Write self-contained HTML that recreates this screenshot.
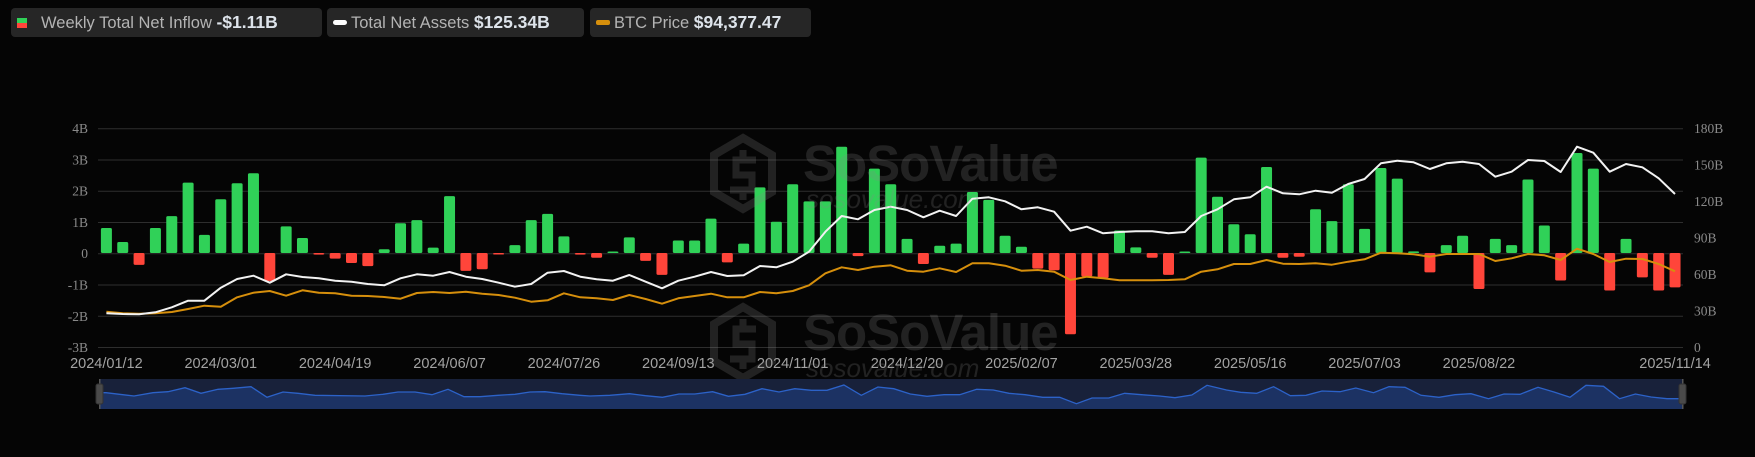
<!DOCTYPE html>
<html><head><meta charset="utf-8">
<style>
html,body{margin:0;padding:0;background:#050505;width:1755px;height:457px;overflow:hidden;font-family:"Liberation Sans",sans-serif;}
.lg{position:absolute;top:8px;height:29px;background:#262626;border-radius:4px;color:#b4b4b4;font-size:16.5px;line-height:29px;white-space:nowrap;}
.lg b{color:#dde3ea;font-size:17.5px;}
svg{position:absolute;left:0;top:0;}
</style></head><body>
<div class="lg" style="left:11px;width:311px;">
 <span style="position:absolute;left:6px;top:10px;width:10px;height:5px;background:#30d158"></span>
 <span style="position:absolute;left:6px;top:15px;width:10px;height:5px;background:#ff453a"></span>
 <span style="position:absolute;left:30px;">Weekly Total Net Inflow <b>-$1.11B</b></span>
</div>
<div class="lg" style="left:327px;width:257px;">
 <span style="position:absolute;left:6px;top:12px;width:14px;height:5px;border-radius:3px;background:#fff"></span>
 <span style="position:absolute;left:24px;">Total Net Assets <b>$125.34B</b></span>
</div>
<div class="lg" style="left:590px;width:221px;">
 <span style="position:absolute;left:6px;top:12px;width:14px;height:5px;border-radius:2px;background:#d68f0c"></span>
 <span style="position:absolute;left:24px;">BTC Price <b>$94,377.47</b></span>
</div>
<svg id="c" width="1755" height="457" xmlns="http://www.w3.org/2000/svg"></svg>
<script>
var bars=[0.8,0.35,-0.38,0.8,1.18,2.25,0.58,1.72,2.23,2.55,-0.9,0.85,0.48,-0.05,-0.18,-0.32,-0.42,0.12,0.95,1.05,0.17,1.82,-0.57,-0.52,-0.02,0.25,1.05,1.25,0.53,-0.05,-0.15,0.02,0.5,-0.25,-0.7,0.4,0.4,1.1,-0.3,0.3,2.1,1.0,2.2,1.65,1.65,3.4,-0.1,2.7,2.2,0.45,-0.35,0.23,0.3,1.95,1.7,0.55,0.2,-0.5,-0.55,-2.6,-0.75,-0.8,0.72,0.18,-0.15,-0.7,0.02,3.05,1.8,0.92,0.6,2.75,-0.15,-0.12,1.4,1.02,2.2,0.77,2.72,2.38,0.05,-0.62,0.25,0.55,-1.15,0.45,0.25,2.35,0.88,-0.88,3.2,2.7,-1.2,0.45,-0.78,-1.2,-1.1];
var wh=[313.3,314,314.3,312.3,307.3,300.7,300.7,287.7,279,275.7,282.7,274.3,277,278.3,280.7,281.7,284,285.3,278.3,274.3,275.7,272,276.7,279,282.7,286.7,284,272.7,271,276.7,279.3,280.7,275,281.7,288.3,280.7,276.7,272,276,275.3,266,267.3,261.7,251.7,231.7,216,219.3,210,206.7,210,217.3,210.7,216,198.7,197.3,201.3,209.3,207.3,211.7,230.7,226.7,233.3,232,231.3,231.3,233.3,232,216,209.3,199.3,197.3,186.7,193.3,194.3,190.7,192.7,184,179,163.3,160.7,162.3,169,163.3,161.7,164,176.7,171.7,160,161,172,146.7,152.7,171.7,164,167.3,178.3,194];
var or=[311.7,313.3,313.7,313.3,312,309,305.7,306.7,297.3,292.7,291,295.7,290.3,292.7,293.3,295.7,296,297,298.7,293,292,293,291.7,293.7,295,297.7,301.7,300.3,293.3,297.3,298.3,300,295,299,303.7,298.3,296,293.7,297.3,297.3,292,293.3,291,285.3,273.3,267.3,270,266.7,265.3,270.7,271.7,268.3,272,263.3,263.3,265.7,270.7,270,271.7,280,276.7,278.3,280.3,280.3,280.3,280,279.3,271.7,269.3,264,264,260,263.7,264,263.3,264.7,261.7,259.3,252.7,253.3,254.3,256.7,254,254,254,261,258.3,254,255.3,260,248.7,254,262,258.7,259,264,271.3];
var dz=[[100,392.7],[106,392.7],[134,396],[153,392.7],[168,391.7],[185,387.7],[201,393.3],[218,389.3],[233,388.3],[251,386.7],[267,397.3],[283,392],[298,393.3],[315,395.3],[365,396],[383,394.3],[398,392],[415,392],[432,394.7],[448,389.3],[464,396.7],[480,396.7],[498,395.3],[515,394.3],[530,392],[545,391.7],[562,393.7],[580,395.3],[590,396],[609.8,395.3],[629.5,393.7],[645.4,395.7],[662.4,397.3],[679,394],[694.8,394],[712.6,391.7],[728.4,396.3],[745,394.3],[762,388.7],[779,392],[794.8,388.7],[811.4,390.3],[827,390.3],[843.9,385],[861.3,395.3],[877.9,387],[893.7,388.7],[910.3,394],[927,396.3],[944,394.7],[959.7,394.7],[976.7,389.3],[993.3,390],[1009,393.3],[1025,394.7],[1042.7,397.3],[1059.7,397.3],[1076.4,403.7],[1092,398],[1108.8,398],[1124.6,393.3],[1141.6,394.7],[1159.4,396],[1175,397.7],[1191.8,395],[1207,385.3],[1226.5,390],[1240.7,392.3],[1256.6,393.3],[1273.6,386.7],[1290.3,395.7],[1306,395.3],[1322,391],[1340,391.7],[1355.8,388],[1373.5,392.7],[1389,386.7],[1405,387.3],[1421,395.3],[1439,397.3],[1455,394.7],[1471,393.7],[1488.5,398.7],[1504,394],[1520,394.3],[1538,387.3],[1554,392],[1570,397.3],[1586,385.3],[1603.5,386.3],[1619.5,398.7],[1635.4,394],[1651,397],[1667,398.7],[1683,398.7]];
var X=function(i){return 106.4+i*16.34;};
var s='';
var lv=['4B','3B','2B','1B','0','-1B','-2B','-3B'],rv=['180B','150B','120B','90B','60B','30B','0'];
for(var k=0;k<8;k++){var y=128.7+k*31.26;s+='<line x1="98" x2="1683" y1="'+y+'" y2="'+y+'" stroke="#2e2e2e" stroke-width="1"/>';
s+='<text x="88" y="'+(y+4.5)+'" text-anchor="end" fill="#8a8a8a" font-family="Liberation Serif,serif" font-size="13.5">'+lv[k]+'</text>';}
for(var k=0;k<7;k++){var y=128.7+k*36.47;s+='<text x="1694" y="'+(y+4.5)+'" fill="#8a8a8a" font-family="Liberation Serif,serif" font-size="13.5">'+rv[k]+'</text>';}
var labs=['2024/01/12','2024/03/01','2024/04/19','2024/06/07','2024/07/26','2024/09/13','2024/11/01','2024/12/20','2025/02/07','2025/03/28','2025/05/16','2025/07/03','2025/08/22'];
for(var k=0;k<labs.length;k++){s+='<text x="'+X(k*7)+'" y="368" text-anchor="middle" fill="#a3a3a3" font-size="14.5">'+labs[k]+'</text>';}
s+='<text x="'+X(96)+'" y="368" text-anchor="middle" fill="#a3a3a3" font-size="14.5">2025/11/14</text>';
for(var i=0;i<bars.length;i++){var v=bars[i],h=Math.max(Math.abs(v)*31.26,1.5),y=v>=0?253-h:253;
s+='<rect x="'+(X(i)-5.5)+'" y="'+y+'" width="11" height="'+h+'" rx="1.5" fill="'+(v>=0?'#30d158':'#ff453a')+'"/>';}
var p1='',p2='';for(var i=0;i<97;i++){p1+=(i?'L':'M')+X(i).toFixed(1)+' '+wh[i]+' ';p2+=(i?'L':'M')+X(i).toFixed(1)+' '+or[i]+' ';}
s+='<path d="'+p2+'" fill="none" stroke="#d68f0c" stroke-width="2" stroke-linejoin="round"/>';
s+='<path d="'+p1+'" fill="none" stroke="#f2f2f2" stroke-width="2" stroke-linejoin="round"/>';
function wm(dy){return '<g transform="translate(0,'+dy+')" opacity="0.22">'+
'<path d="M743 138 L772 155 L772 192 L743 209 L714 192 L714 155 Z" fill="none" stroke="#888" stroke-width="8"/>'+
'<path d="M756 160 L736 160 L736 175 L752 175 L752 190 L730 190 M743 150 L743 160 M743 190 L743 200" fill="none" stroke="#888" stroke-width="7"/>'+
'<text x="803" y="181" fill="#888" font-weight="bold" font-size="51" letter-spacing="-1">SoSoValue</text>'+
'<text x="806" y="208" fill="#888" font-style="italic" font-size="26">sosovalue.com</text></g>';}
s+=wm(0)+wm(169);
s+='<rect x="100" y="379" width="1583" height="30" fill="#18213a"/>';
var a='M100 409 ',l='';for(var i=0;i<dz.length;i++){a+='L'+dz[i][0]+' '+dz[i][1]+' ';l+=(i?'L':'M')+dz[i][0]+' '+dz[i][1]+' ';}
a+='L1683 409 Z';
s+='<path d="'+a+'" fill="#1c3263"/><path d="'+l+'" fill="none" stroke="#2c62c8" stroke-width="1.3"/>';
s+='<rect x="99" y="379" width="1.5" height="30" fill="#555"/><rect x="96" y="384" width="7" height="20" rx="2" fill="#4a4a4a" stroke="#333"/>';
s+='<rect x="1682" y="379" width="1.5" height="30" fill="#555"/><rect x="1679" y="384" width="7" height="20" rx="2" fill="#4a4a4a" stroke="#333"/>';
document.getElementById('c').innerHTML=s;
</script>
</body></html>
